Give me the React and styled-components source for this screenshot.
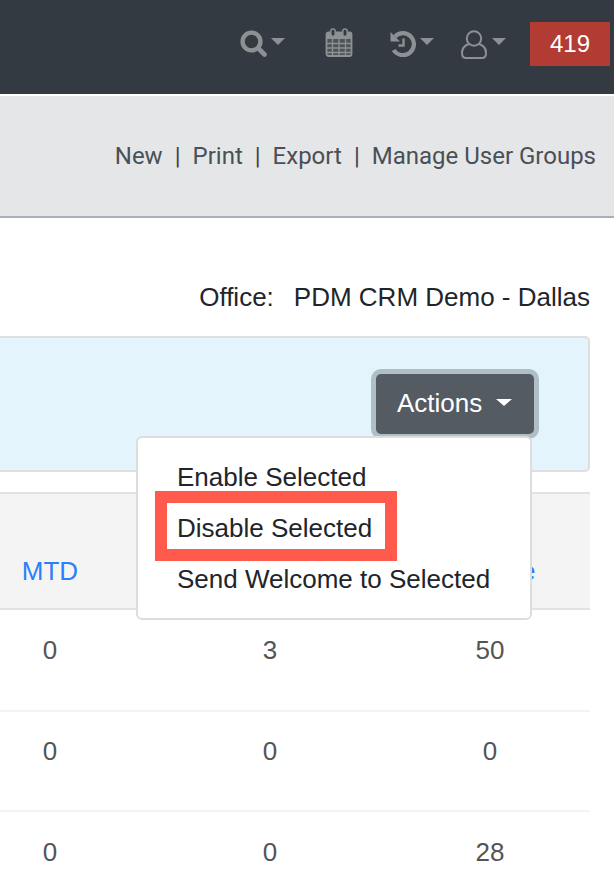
import React from "react";
import styled, { createGlobalStyle } from "styled-components";

const Global = createGlobalStyle`
  html, body { margin: 0; padding: 0; background: #fff; }
  body { width: 614px; height: 878px; overflow: hidden; font-family: "Liberation Sans", Arial, sans-serif; }
  * { box-sizing: border-box; }
`;
const Page = styled.div`
  width: 614px; height: 878px; overflow: hidden; display: flex; flex-direction: column;
`;
const TopBar = styled.header`
  flex: none; height: 94px; background: #343a42; display: flex; align-items: flex-start;
  justify-content: flex-end; padding: 22px 4px 0 0;
`;
const NavItem = styled.div`
  display: flex; align-items: flex-start; margin-right: ${p => p.$mr}px; padding-top: ${p => p.$pt}px;
`;
const NavCaret = styled.span`
  flex: none; width: 0; height: 0; margin: ${p => p.$mt}px 0 0 ${p => p.$ml}px;
  border-left: 7px solid transparent; border-right: 7px solid transparent; border-top: 7px solid #8c9194;
`;
const Badge = styled.div`
  width: 80px; height: 44px; background: #b23c33; color: #fff; font-size: 24px;
  display: flex; align-items: center; justify-content: center;
`;
const SubBar = styled.nav`
  flex: none; height: 122px; margin-top: 2px; background: #e5e6e8; border-bottom: 2px solid #aab0b8;
  display: flex; justify-content: flex-end; align-items: center; padding: 0 18px 0 0;
  font-family: "Roboto", sans-serif; font-size: 24px; color: #495057; white-space: nowrap;
`;
const Sep = styled.span`margin: 0 12px; color: #3f464c;`;
const OfficeLine = styled.div`
  flex: none; height: 118px; display: flex; justify-content: flex-end; gap: 20px; padding: 64px 24px 0 0;
  font-size: 26px; line-height: 30px; color: #212529; white-space: nowrap;
`;
const ActionPanel = styled.section`
  flex: none; position: relative; width: 600px; height: 136px; margin-left: -10px; background: #e3f4fd;
  border: 2px solid #dddfe1; border-radius: 5px; display: flex; justify-content: flex-end;
  padding: 36px 54px 0 0;
`;
const ActionsWrap = styled.div`position: relative; height: 60px;`;
const ActionsButton = styled.button`
  width: 158px; height: 60px; padding: 0 22px 2px 21px; border: 0; border-radius: 5px; background: #545b62;
  box-shadow: 0 0 0 5px #b0bec6; color: #fff; font: 26px "Liberation Sans", Arial, sans-serif;
  display: flex; align-items: center; justify-content: space-between;
`;
const ButtonCaret = styled.span`
  width: 0; height: 0; border-left: 8px solid transparent; border-right: 8px solid transparent;
  border-top: 7px solid #fff; margin-top: -2px;
`;
const Menu = styled.div`
  position: absolute; z-index: 2; top: calc(100% + 2px); right: 2px; width: 396px; height: 184px;
  padding: 14px 0 0; background: #fff; border: 2px solid #dcdddf; border-radius: 6px;
`;
const MenuItem = styled.div`
  height: 51px; line-height: 51px; padding-left: 39px; font-size: 26px; color: #212529; white-space: nowrap;
`;
const Highlight = styled.div`
  position: absolute; left: 17px; top: 53px; width: 242px; height: 70px; border: 12px solid #ff5a4b;
`;
const Table = styled.div`
  flex: none; width: 650px; margin: 20px 0 0 -60px; color: #555; font-size: 26px;
`;
const HeadRow = styled.div`
  display: grid; grid-template-columns: repeat(3, 220px); height: 118px; align-items: end; padding-bottom: 22px;
  background: #f4f4f5; border-top: 2px solid #dfe2e6; border-bottom: 2px solid #dfe2e6;
`;
const HeadCell = styled.div`text-align: center; line-height: 30px; color: #2b7ffb;`;
const Row = styled.div`
  display: grid; grid-template-columns: repeat(3, 220px); height: ${p => p.$h}px; padding-top: ${p => p.$pt}px;
  border-bottom: 2px solid #f3f4f5;
`;
const Cell = styled.div`text-align: center; line-height: 30px;`;

const Icon = styled.svg`display: block; flex: none; color: #8c9194;`;

const SearchIcon = () => (
  <Icon width="27" height="27" viewBox="0 0 27 27" fill="none" stroke="currentColor">
    <circle cx="11.5" cy="11.5" r="8.9" strokeWidth="4.4" />
    <path d="M18.5 18.5 L24.5 24.5" strokeWidth="4.6" strokeLinecap="round" />
  </Icon>
);
const CalendarIcon = () => (
  <Icon width="28" height="29" viewBox="0 0 28 29" fill="none">
    <rect x="1.5" y="4.5" width="25" height="23.5" rx="2" fill="#4d5357" stroke="currentColor" strokeWidth="1.8" />
    <rect x="1.5" y="4.5" width="25" height="6.5" fill="currentColor" />
    <path d="M1.5 15.5h25M1.5 20h25M1.5 24.5h25M7.5 11v17M14 11v17M20.5 11v17" stroke="currentColor" strokeWidth="1.3" />
    <rect x="5.8" y="1" width="4.4" height="7.5" rx="2.2" fill="#343a42" stroke="currentColor" strokeWidth="1.5" />
    <rect x="17.8" y="1" width="4.4" height="7.5" rx="2.2" fill="#343a42" stroke="currentColor" strokeWidth="1.5" />
  </Icon>
);
const HistoryIcon = () => (
  <Icon width="26" height="26" viewBox="0 0 26 26" fill="none" stroke="currentColor">
    <path d="M5 5.5 A11 11 0 1 1 3.6 19" strokeWidth="4.2" />
    <path d="M0.5 1 L10 10.5 L0.5 10.5 Z" fill="currentColor" stroke="none" />
    <path d="M13.5 7.5 V14.5 H8.5" strokeWidth="2.4" />
  </Icon>
);
const UserIcon = () => (
  <Icon width="26" height="29" viewBox="0 0 26 29" fill="none" stroke="currentColor" strokeWidth="2">
    <circle cx="13" cy="8.5" r="7.2" />
    <path d="M8 14 C3.5 15.5 1 18.5 1 23 C1 26 2.5 28 5 28 H21 C23.5 28 25 26 25 23 C25 18.5 22.5 15.5 18 14" />
  </Icon>
);

const rows = [
  { h: 102, pt: 25, v: ["0", "3", "50"] },
  { h: 100, pt: 24, v: ["0", "0", "0"] },
  { h: 100, pt: 25, v: ["0", "0", "28"] },
];

export default function App() {
  return (
    <Page>
      <Global />
      <TopBar>
        <NavItem $mr={40} $pt={8}><SearchIcon /><NavCaret $ml={4} $mt={8} /></NavItem>
        <NavItem $mr={37} $pt={6}><CalendarIcon /></NavItem>
        <NavItem $mr={27} $pt={9}><HistoryIcon /><NavCaret $ml={4} $mt={7} /></NavItem>
        <NavItem $mr={24} $pt={8}><UserIcon /><NavCaret $ml={5} $mt={8} /></NavItem>
        <Badge>419</Badge>
      </TopBar>
      <SubBar>
        New<Sep>|</Sep>Print<Sep>|</Sep>Export<Sep>|</Sep>Manage User Groups
      </SubBar>
      <OfficeLine>
        <span>Office:</span>
        <span>PDM CRM Demo - Dallas</span>
      </OfficeLine>
      <ActionPanel>
        <ActionsWrap>
          <ActionsButton>Actions<ButtonCaret /></ActionsButton>
          <Menu>
            <MenuItem>Enable Selected</MenuItem>
            <MenuItem>Disable Selected</MenuItem>
            <MenuItem>Send Welcome to Selected</MenuItem>
            <Highlight />
          </Menu>
        </ActionsWrap>
      </ActionPanel>
      <Table>
        <HeadRow>
          <HeadCell>MTD</HeadCell>
          <HeadCell />
          <HeadCell>Lifetime</HeadCell>
        </HeadRow>
        {rows.map((r, i) => (
          <Row key={i} $h={r.h} $pt={r.pt}>
            {r.v.map((c, j) => <Cell key={j}>{c}</Cell>)}
          </Row>
        ))}
      </Table>
    </Page>
  );
}
